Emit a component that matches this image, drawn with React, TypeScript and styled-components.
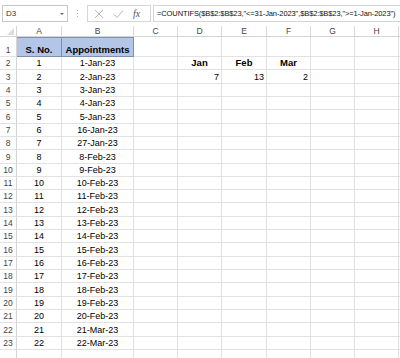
import React from "react";
import styled, { createGlobalStyle } from "styled-components";

const Global = createGlobalStyle`
  html, body { margin: 0; padding: 0; background: #fff; overflow: hidden; }
  body { font-family: "Liberation Sans", Arial, sans-serif; }
`;

const Page = styled.div`
  width: 400px;
  height: 358px;
  overflow: hidden;
  display: flex;
  flex-direction: column;
  background: #fff;
`;

const Toolbar = styled.div`
  height: 26px;
  flex-shrink: 0;
  display: flex;
  align-items: flex-start;
  padding-top: 5px;
  box-sizing: border-box;
`;

const NameBox = styled.div`
  margin-left: 2px;
  width: 66px;
  height: 17px;
  border: 1px solid #c8c8c8;
  box-sizing: border-box;
  display: flex;
  align-items: center;
  justify-content: space-between;
  padding: 0 3px 0 3px;
  font-size: 8px;
  color: #333;
`;

const Caret = styled.span`
  width: 0;
  height: 0;
  border-left: 2px solid transparent;
  border-right: 2px solid transparent;
  border-top: 2px solid #666;
`;

const Dots = styled.div`
  width: 19px;
  height: 17px;
  display: flex;
  flex-direction: column;
  align-items: center;
  justify-content: center;
  gap: 2px;
`;

const Dot = styled.span`
  width: 1px;
  height: 1px;
  background: #b0b0b0;
`;

const FxBox = styled.div`
  width: 64px;
  height: 17px;
  border: 1px solid #d6d6d6;
  box-sizing: border-box;
  display: flex;
  align-items: center;
  padding-left: 6px;
  gap: 9px;
`;

const FxLabel = styled.span`
  font-family: "Liberation Serif", "Times New Roman", serif;
  font-style: italic;
  font-size: 10px;
  color: #555;
`;

const FormulaBox = styled.div`
  margin-left: 2px;
  flex: 1;
  height: 17px;
  border: 1px solid #d6d6d6;
  border-right: none;
  box-sizing: border-box;
  display: flex;
  align-items: center;
  padding-left: 3px;
  font-size: 7.5px;
  letter-spacing: -0.1px;
  color: #111;
  white-space: nowrap;
  overflow: hidden;
`;

const Sheet = styled.div`
  display: grid;
  grid-template-columns: 17px 45px 72px 44px 44px 45px 44px 44px 44px 1fr;
  grid-template-rows: 11px 20px repeat(22, 13.32px) 20px;
`;

const Corner = styled.div`
  position: relative;
  border-right: 1px solid #d4d4d4;
  border-bottom: 1px solid #d4d4d4;
  box-sizing: border-box;
  &::after {
    content: "";
    position: absolute;
    right: 2px;
    bottom: 1px;
    width: 0;
    height: 0;
    border-left: 7px solid transparent;
    border-bottom: 7px solid #dcdcdc;
  }
`;

const ColHead = styled.div`
  border-right: 1px solid #dadada;
  border-bottom: 1px solid #d4d4d4;
  box-sizing: border-box;
  display: flex;
  align-items: center;
  justify-content: center;
  font-size: 8.5px;
  color: #444;
`;

const RowHead = styled.div`
  border-right: 1px solid #d4d4d4;
  border-bottom: 1px solid #e2e2e2;
  box-sizing: border-box;
  display: flex;
  align-items: flex-end;
  justify-content: center;
  padding-bottom: 1px;
  font-size: 8.5px;
  color: #444;
`;

const Cell = styled.div<{ $align?: string; $bold?: boolean; $fill?: boolean }>`
  border-right: 1px solid ${(p) => (p.$fill ? "#7f8fae" : "#e2e2e2")};
  border-bottom: 1px solid ${(p) => (p.$fill ? "#7f8fae" : "#e2e2e2")};
  box-shadow: ${(p) => (p.$fill ? "inset 0 1px 0 #7f8fae" : "none")};
  background: ${(p) => (p.$fill ? "#b4c6e7" : "#fff")};
  box-sizing: border-box;
  display: flex;
  align-items: flex-end;
  justify-content: ${(p) =>
    p.$align === "right" ? "flex-end" : p.$align === "center" ? "center" : "flex-start"};
  padding: 0 2px 1px 2px;
  font-size: ${(p) => (p.$bold ? "9.5px" : "9px")};
  font-weight: ${(p) => (p.$bold ? 700 : 400)};
  color: #000;
  white-space: nowrap;
  overflow: hidden;
`;

const XIcon = () => (
  <svg width="10" height="10" viewBox="0 0 10 10">
    <path d="M1 1 L9 9 M9 1 L1 9" stroke="#b9b9b9" strokeWidth="1" fill="none" />
  </svg>
);

const CheckIcon = () => (
  <svg width="11" height="10" viewBox="0 0 11 10">
    <path d="M1 5.5 L4 8.5 L10 1.5" stroke="#b9b9b9" strokeWidth="1" fill="none" />
  </svg>
);

const cols = ["A", "B", "C", "D", "E", "F", "G", "H"];

const dates = [
  "1-Jan-23", "2-Jan-23", "3-Jan-23", "4-Jan-23", "5-Jan-23", "16-Jan-23", "27-Jan-23",
  "8-Feb-23", "9-Feb-23", "10-Feb-23", "11-Feb-23", "12-Feb-23", "13-Feb-23", "14-Feb-23",
  "15-Feb-23", "16-Feb-23", "17-Feb-23", "18-Feb-23", "19-Feb-23", "20-Feb-23",
  "21-Mar-23", "22-Mar-23",
];

type CellData = { text?: string; align?: string; bold?: boolean; fill?: boolean };

function rowCells(r: number): CellData[] {
  const cells: CellData[] = Array.from({ length: 9 }, () => ({}));
  if (r === 1) {
    cells[0] = { text: "S. No.", align: "center", bold: true, fill: true };
    cells[1] = { text: "Appointments", align: "center", bold: true, fill: true };
  } else if (r >= 2 && r <= 23) {
    cells[0] = { text: String(r - 1), align: "center" };
    cells[1] = { text: dates[r - 2], align: "center" };
  }
  if (r === 2) {
    cells[3] = { text: "Jan", align: "center", bold: true };
    cells[4] = { text: "Feb", align: "center", bold: true };
    cells[5] = { text: "Mar", align: "center", bold: true };
  }
  if (r === 3) {
    cells[3] = { text: "7", align: "right" };
    cells[4] = { text: "13", align: "right" };
    cells[5] = { text: "2", align: "right" };
  }
  return cells;
}

export default function App() {
  const rows = Array.from({ length: 24 }, (_, i) => i + 1);
  return (
    <Page>
      <Global />
      <Toolbar>
        <NameBox>
          <span>D3</span>
          <Caret />
        </NameBox>
        <Dots>
          <Dot />
          <Dot />
          <Dot />
        </Dots>
        <FxBox>
          <XIcon />
          <CheckIcon />
          <FxLabel>fx</FxLabel>
        </FxBox>
        <FormulaBox>
          =COUNTIFS($B$2:$B$23,"&lt;=31-Jan-2023",$B$2:$B$23,"&gt;=1-Jan-2023")
        </FormulaBox>
      </Toolbar>
      <Sheet>
        <Corner />
        {cols.map((c) => (
          <ColHead key={c}>{c}</ColHead>
        ))}
        <ColHead />
        {rows.map((r) => (
          <React.Fragment key={r}>
            <RowHead>{r}</RowHead>
            {rowCells(r).map((c, i) => (
              <Cell key={i} $align={c.align} $bold={c.bold} $fill={c.fill}>
                {c.text}
              </Cell>
            ))}
          </React.Fragment>
        ))}
      </Sheet>
    </Page>
  );
}
